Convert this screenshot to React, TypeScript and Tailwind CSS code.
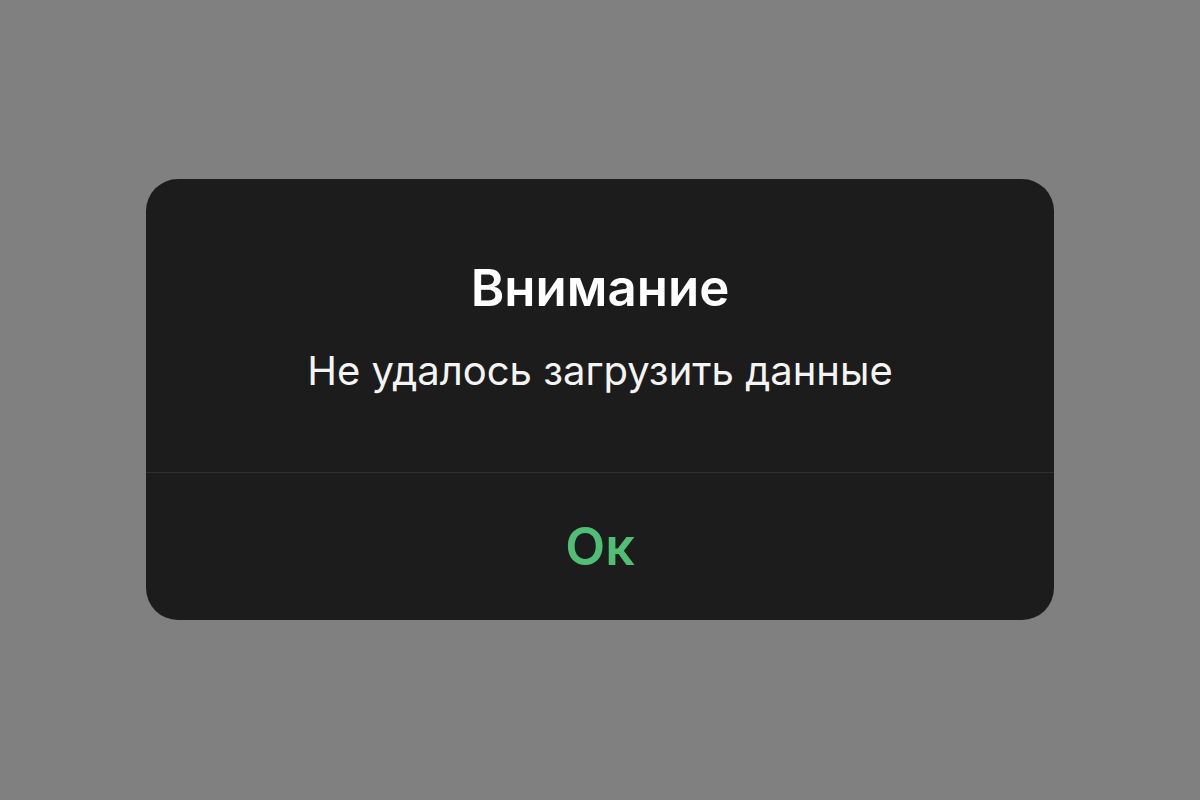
export default function App() {
  return (
    <div className="w-[1200px] h-[800px] bg-[#808080] flex items-center justify-center" style={{ fontFamily: 'Inter, "Noto Sans", sans-serif' }}>
      <div className="w-[908px] h-[441px] bg-[#1c1c1c] rounded-[32px] flex flex-col overflow-hidden -mt-[1px]">
        <div className="h-[294px] flex flex-col items-center pt-[78px] border-b border-[#2e2e2e]">
          <div className="text-[51px] leading-[61px] font-semibold text-white">Внимание</div>
          <div className="mt-[29px] text-[40px] leading-[48px] text-[#f4f4f4]">Не удалось загрузить данные</div>
        </div>
        <div className="flex-1 flex items-center justify-center">
          <span className="text-[52px] leading-[60px] font-semibold text-[#4fbf75]">Ок</span>
        </div>
      </div>
    </div>
  );
}
